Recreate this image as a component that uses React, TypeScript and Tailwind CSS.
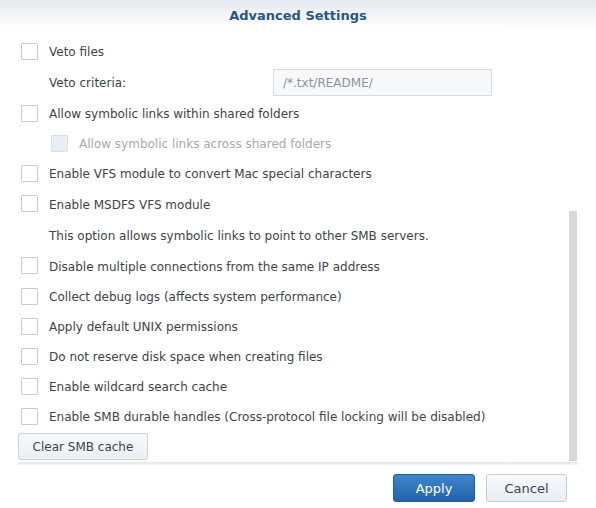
import React from "react";

function Box({ disabled = false }: { disabled?: boolean }) {
  return (
    <span
      className={
        disabled
          ? "w-[17px] h-[17px] shrink-0 border border-[#d9e0e6] bg-[#e9eef3] rounded-[1px]"
          : "w-[17px] h-[17px] shrink-0 border border-[#c6cdd3] bg-white rounded-[1px]"
      }
    />
  );
}

function Row({
  label,
  h,
  indent = false,
  disabled = false,
}: {
  label: string;
  h: string;
  indent?: boolean;
  disabled?: boolean;
}) {
  return (
    <div className={`flex items-center ${h} ${indent ? "pl-[30px]" : ""}`}>
      <Box disabled={disabled} />
      <span className={`ml-[11px] mt-[2px] ${disabled ? "text-[#a3abb3]" : "text-[#3e4349]"}`}>{label}</span>
    </div>
  );
}

export default function App() {
  return (
    <div
      className="w-[596px] h-[508px] bg-white flex flex-col text-[12px] leading-none overflow-hidden"
      style={{ fontFamily: '"DejaVu Sans", Verdana, sans-serif' }}
    >
      <div className="h-[28px] shrink-0 flex items-center justify-center bg-gradient-to-b from-[#e4e9ef] to-white">
        <span className="font-bold text-[13px] text-[#2a5586] mt-[2px]">Advanced Settings</span>
      </div>
      <div className="h-[8px] shrink-0" />
      <div className="flex mx-[18px] h-[425px] shrink-0">
        <div className="flex-1 flex flex-col pl-[3px]">
          <Row label="Veto files" h="h-[30px]" />
          <div className="flex items-center h-[32px]">
            <span className="ml-[28px] mt-[2px] text-[#3e4349] w-[224px]">Veto criteria:</span>
            <div className="w-[219px] h-[27px] border border-[#d5dce2] bg-[#f6f8fa] flex items-center pl-[9px] pt-[1px] text-[#8c939a]">
              /*.txt/README/
            </div>
          </div>
          <Row label="Allow symbolic links within shared folders" h="h-[30px]" />
          <Row label="Allow symbolic links across shared folders" h="h-[30px]" indent disabled />
          <Row label="Enable VFS module to convert Mac special characters" h="h-[30px]" />
          <Row label="Enable MSDFS VFS module" h="h-[31px]" />
          <div className="flex items-center h-[31px]">
            <span className="ml-[28px] mt-[2px] text-[#3e4349]">
              This option allows symbolic links to point to other SMB servers.
            </span>
          </div>
          <Row label="Disable multiple connections from the same IP address" h="h-[31px]" />
          <Row label="Collect debug logs (affects system performance)" h="h-[30px]" />
          <Row label="Apply default UNIX permissions" h="h-[30px]" />
          <Row label="Do not reserve disk space when creating files" h="h-[30px]" />
          <Row label="Enable wildcard search cache" h="h-[30px]" />
          <Row label="Enable SMB durable handles (Cross-protocol file locking will be disabled)" h="h-[30px]" />
          <div className="mt-[2px] -ml-[3px]">
            <button className="w-[130px] h-[27px] pt-[1px] border border-[#c9d2da] rounded-[3px] bg-gradient-to-b from-[#f8fafc] to-[#eaeff4] text-[#3e4349] text-[12px]">
              Clear SMB cache
            </button>
          </div>
        </div>
        <div className="w-[8px] mr-[1px] flex flex-col justify-end">
          <div className="h-[250px] bg-[#d6d8da]" />
        </div>
      </div>
      <div className="mx-[18px] h-[3px] shrink-0 bg-gradient-to-b from-[#e2e4e6] to-[#f4f5f6] mt-[1px]" />
      <div className="flex justify-end mr-[29px] mt-[9px] gap-[11px]">
        <button className="w-[82px] h-[28px] pt-[1px] rounded-[3px] border border-[#1f5ca3] bg-gradient-to-b from-[#3f86cc] to-[#2462ab] text-white text-[13px]">
          Apply
        </button>
        <button className="w-[81px] h-[28px] pt-[1px] rounded-[3px] border border-[#c5ced7] bg-gradient-to-b from-[#f8fafc] to-[#e9eef3] text-[#3e4349] text-[13px]">
          Cancel
        </button>
      </div>
    </div>
  );
}
